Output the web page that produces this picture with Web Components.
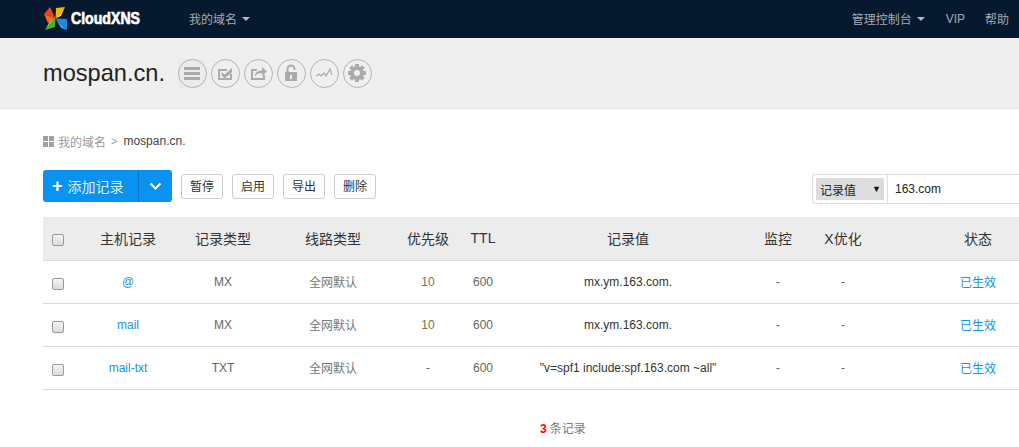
<!DOCTYPE html>
<html lang="zh">
<head>
<meta charset="utf-8">
<title>CloudXNS</title>
<style>
  html, body { margin: 0; padding: 0; background: #fff; overflow: hidden; }
  body { width: 1019px; height: 447px; font-family: "Liberation Sans", "Noto Sans CJK SC", sans-serif; color: #333; }
</style>
</head>
<body>
<top-nav></top-nav>
<domain-head name="mospan.cn."></domain-head>
<page-body>
  <bread-crumb current="mospan.cn."></bread-crumb>
  <record-tools></record-tools>
  <record-table>
    <record-row host="@" type="MX" line="全网默认" prio="10" ttl="600" value="mx.ym.163.com." watch="-" opt="-" state="已生效"></record-row>
    <record-row host="mail" type="MX" line="全网默认" prio="10" ttl="600" value="mx.ym.163.com." watch="-" opt="-" state="已生效"></record-row>
    <record-row host="mail-txt" type="TXT" line="全网默认" prio="-" ttl="600" value="&quot;v=spf1 include:spf.163.com ~all&quot;" watch="-" opt="-" state="已生效"></record-row>
  </record-table>
  <record-count count="3"></record-count>
</page-body>

<script>
const COLS = "30px 110px 80px 140px 50px 60px 230px 70px 60px 210px";

class TopNav extends HTMLElement {
  connectedCallback() {
    this.attachShadow({ mode: "open" });
    this.shadowRoot.innerHTML = `
      <style>
        :host { display: flex; align-items: center; box-sizing: border-box; height: 38px; background: #07192e; color: #a3abb5; font-size: 12px; padding: 0 10px 1px 43px; }
        .logo { display: flex; align-items: center; width: 146px; }
        .logo svg { width: 25px; height: 25px; margin-right: 3px; flex: none; }
        .logo b { display: inline-block; font-size: 17px; color: #fff; transform: scaleX(.83); transform-origin: left center; -webkit-text-stroke: .7px #fff; white-space: nowrap; }
        .spacer { flex: 1; }
        .item { display: flex; align-items: center; }
        .caret { width: 0; height: 0; border: 4px solid transparent; border-top-color: #b4bac2; border-bottom: 0; margin-left: 5px; }
        .mgr { margin-right: 21px; }
        .vip { margin-right: 20px; }
      </style>
      <div class="logo">
        <svg viewBox="0 0 25 25">
          <polygon points="1,8 12.5,12.5 7,1" fill="#e8451e"/>
          <polygon points="1,8 12.5,12.5 5,17" fill="#f36a21"/>
          <polygon points="12.5,12.5 13,2 22,1" fill="#f7b500"/>
          <polygon points="12.5,12.5 22,1 18,10" fill="#f9d030"/>
          <polygon points="12.5,12.5 24,13 24,24" fill="#1f88e5"/>
          <polygon points="12.5,12.5 24,24 18,22" fill="#2aa5f0"/>
          <polygon points="12.5,12.5 12,21 2,24" fill="#4caf2a"/>
          <polygon points="12.5,12.5 2,24 7,15" fill="#7ac943"/>
        </svg>
        <b>CloudXNS</b>
      </div>
      <div class="item">我的域名<span class="caret"></span></div>
      <div class="spacer"></div>
      <div class="item mgr">管理控制台<span class="caret"></span></div>
      <div class="item vip">VIP</div>
      <div class="item">帮助</div>
    `;
  }
}
customElements.define("top-nav", TopNav);

class DomainHead extends HTMLElement {
  connectedCallback() {
    this.attachShadow({ mode: "open" });
    const g = "#ababab";
    const teeth = "M13 6h4v3.500h-4zM13 20.500h4V24h-4zM6 13h3.500v4H6zM20.500 13H24v4h-3.500z";
    const icons = [
      `<rect x="7" y="9" width="16" height="3" fill="${g}"/><rect x="7" y="14" width="16" height="3" fill="${g}"/><rect x="7" y="19" width="16" height="3" fill="${g}"/>`,
      `<path d="M8 11h9v2h-7v7h10v-4h2v6H8z" fill="${g}"/><path d="M11.500 14l3 2.500L22 10v4.500L15 20h-1l-2.500-3z" fill="${g}"/>`,
      `<path d="M8 11h6v2h-4v7h10v-3h2v5H8z" fill="${g}"/><path d="M11.500 18.500c.5-4 3.500-6 7.500-6V9l5 4.500-5 4.500v-3c-3 0-5.500 1-7.500 3.500z" fill="${g}"/>`,
      `<path d="M9 14h12v9H9z" fill="${g}"/><path d="M11.500 14v-3a3.500 3.500 0 0 1 7 0v1" fill="none" stroke="${g}" stroke-width="2"/><rect x="14" y="17" width="2" height="4" fill="#efefef"/>`,
      `<path d="M7 18l3-2 2 2 3-3 2 3 4-7 2 6" fill="none" stroke="${g}" stroke-width="1.200"/>`,
      `<circle cx="15" cy="15" r="5" fill="none" stroke="${g}" stroke-width="4"/><path d="${teeth}" fill="${g}"/><path d="${teeth}" fill="${g}" transform="rotate(45 15 15)"/>`
    ];
    this.shadowRoot.innerHTML = `
      <style>
        :host { display: flex; align-items: center; box-sizing: border-box; height: 71px; padding: 0 0 1px 43px; background: #efefef; border-bottom: 1px solid #e6e6e6; }
        h1 { margin: 0 13px 0 0; font-size: 23.600px; font-weight: normal; color: #222; line-height: 30px; }
        .icons { display: flex; gap: 4px; margin-top: 1px; }
        .cell:first-child { background: #ebebeb; }
        .cell { display: block; width: 29px; height: 29px; }
        .ic { display: block; box-sizing: border-box; width: 29px; height: 29px; border: 1px solid #b3b3b3; border-radius: 50%; }
        .ic svg { display: block; width: 30px; height: 30px; margin: -1.500px; }
      </style>
      <h1>${this.getAttribute("name")}</h1>
      <div class="icons">${icons.map(i => `<span class="cell"><span class="ic"><svg viewBox="0 0 30 30">${i}</svg></span></span>`).join("")}</div>
    `;
  }
}
customElements.define("domain-head", DomainHead);

class PageBody extends HTMLElement {
  connectedCallback() {
    this.attachShadow({ mode: "open" });
    this.shadowRoot.innerHTML = `
      <style>
        :host { display: block; padding: 23px 0 0 43px; width: 1083px; box-sizing: content-box; }
      </style>
      <slot></slot>
    `;
  }
}
customElements.define("page-body", PageBody);

class BreadCrumb extends HTMLElement {
  connectedCallback() {
    this.attachShadow({ mode: "open" });
    this.shadowRoot.innerHTML = `
      <style>
        :host { display: flex; align-items: center; height: 18px; font-size: 12px; color: #999; }
        .grid { display: grid; grid-template-columns: 5px 5px; gap: 1px; margin-right: 4px; }
        .grid i { width: 5px; height: 5px; background: #a0a0a0; }
        .sep { margin: 0 5px; font-size: 11px; }
        .cur { color: #444; font-size: 12px; margin-left: 1px; }
      </style>
      <span class="grid"><i></i><i></i><i></i><i></i></span>
      <span>我的域名</span><span class="sep">&gt;</span><span class="cur">${this.getAttribute("current")}</span>
    `;
  }
}
customElements.define("bread-crumb", BreadCrumb);

class RecordTools extends HTMLElement {
  connectedCallback() {
    this.attachShadow({ mode: "open" });
    this.shadowRoot.innerHTML = `
      <style>
        :host { display: flex; align-items: center; margin: 20px 0 15px; height: 32px; font-size: 12px; color: #333; width: 976px; }
        .add { display: flex; width: 129px; height: 32px; box-sizing: border-box; background: #0893f2; border-radius: 3px; color: #dff1ff; font-size: 14px; margin-right: 9px; }
        .add .main { display: flex; align-items: center; width: 96px; box-sizing: border-box; padding-left: 9px; border-right: 1px solid #0a74c0; }
        .add .plus { font-weight: bold; color: #fff; font-size: 18px; line-height: 1; margin-right: 5px; }
        .add .drop { flex: 1; display: flex; align-items: center; justify-content: center; }
        .btn { display: flex; align-items: center; justify-content: center; box-sizing: border-box; width: 42px; height: 25px; padding-bottom: 1px; border: 1px solid #ccc; border-radius: 3px; background: #fff; margin-right: 9px; }
        .spacer { flex: 1; }
        .search { display: flex; align-self: flex-start; box-sizing: border-box; width: 210px; height: 30px; margin: 4px -3px 0 0; border: 1px solid #ddd; border-right: 0; border-radius: 3px 0 0 3px; }
        .sel { width: 75px; box-sizing: border-box; border-right: 1px solid #ddd; padding: 3px; }
        .sel div { display: flex; align-items: center; justify-content: space-between; height: 22px; background: #ddd; padding: 0 3px 0 4px; color: #222; }
        .sel i { font-style: normal; font-size: 9px; color: #111; }
        .val { display: flex; align-items: center; padding-left: 7px; font-size: 12px; color: #222; }
      </style>
      <div class="add">
        <div class="main"><span class="plus">+</span>添加记录</div>
        <div class="drop"><svg width="13" height="9" viewBox="0 0 13 9"><path d="M1.500 1.500l5 5 5-5" fill="none" stroke="#fff" stroke-width="2"/></svg></div>
      </div>
      <div class="btn">暂停</div><div class="btn">启用</div><div class="btn">导出</div><div class="btn">删除</div>
      <div class="spacer"></div>
      <div class="search">
        <div class="sel"><div>记录值<i>▼</i></div></div>
        <div class="val">163.com</div>
      </div>
    `;
  }
}
customElements.define("record-tools", RecordTools);

class RecordTable extends HTMLElement {
  connectedCallback() {
    this.attachShadow({ mode: "open" });
    const heads = ["主机记录", "记录类型", "线路类型", "优先级", "TTL", "记录值", "监控", "X优化", "状态"];
    this.shadowRoot.innerHTML = `
      <style>
        :host { display: block; }
        .head { display: grid; grid-template-columns: ${COLS}; align-items: center; box-sizing: border-box; height: 44px; padding-bottom: 2px; background: #ececec; border-bottom: 1px solid #d9d9d9; font-size: 14px; color: #333; text-align: center; }
        .box { box-sizing: border-box; width: 12px; height: 12px; margin: 4px 0 0 9px; border: 1px solid #999; border-radius: 2px; background: linear-gradient(#f4f4f4, #dcdcdc); }
      </style>
      <div class="head"><span class="box"></span>${heads.map(h => `<span>${h}</span>`).join("")}</div>
      <slot></slot>
    `;
  }
}
customElements.define("record-table", RecordTable);

class RecordRow extends HTMLElement {
  connectedCallback() {
    this.attachShadow({ mode: "open" });
    const a = n => this.getAttribute(n);
    this.shadowRoot.innerHTML = `
      <style>
        :host { display: grid; grid-template-columns: ${COLS}; align-items: center; box-sizing: border-box; height: 43px; border-bottom: 1px solid #d9d9d9; font-size: 12px; color: #666; text-align: center; }
        .box { box-sizing: border-box; width: 12px; height: 12px; margin: 4px 0 0 9px; border: 1px solid #999; border-radius: 2px; background: linear-gradient(#f4f4f4, #dcdcdc); }
        .host, .state { color: #1295e6; }
        .line, .state { padding-bottom: 2px; }
        .val { color: #333; white-space: nowrap; }
        .line { color: #777; }
        .prio { color: #8a6d3b; }
      </style>
      <span class="box"></span>
      <span class="host">${a("host")}</span>
      <span>${a("type")}</span>
      <span class="line">${a("line")}</span>
      <span class="${a("prio") === "-" ? "" : "prio"}">${a("prio")}</span>
      <span>${a("ttl")}</span>
      <span class="val">${a("value").replace(/"/g, "&quot;")}</span>
      <span>${a("watch")}</span>
      <span>${a("opt")}</span>
      <span class="state">${a("state")}</span>
    `;
  }
}
customElements.define("record-row", RecordRow);

class RecordCount extends HTMLElement {
  connectedCallback() {
    this.attachShadow({ mode: "open" });
    this.shadowRoot.innerHTML = `
      <style>
        :host { display: block; width: 1083px; margin-left: -43px; padding-left: 540px; box-sizing: border-box; margin-top: 30px; font-size: 12px; color: #777; line-height: 18px; }
        b { color: #f00; margin-right: 3px; }
      </style>
      <b>${this.getAttribute("count")}</b>条记录
    `;
  }
}
customElements.define("record-count", RecordCount);
</script>
</body>
</html>
